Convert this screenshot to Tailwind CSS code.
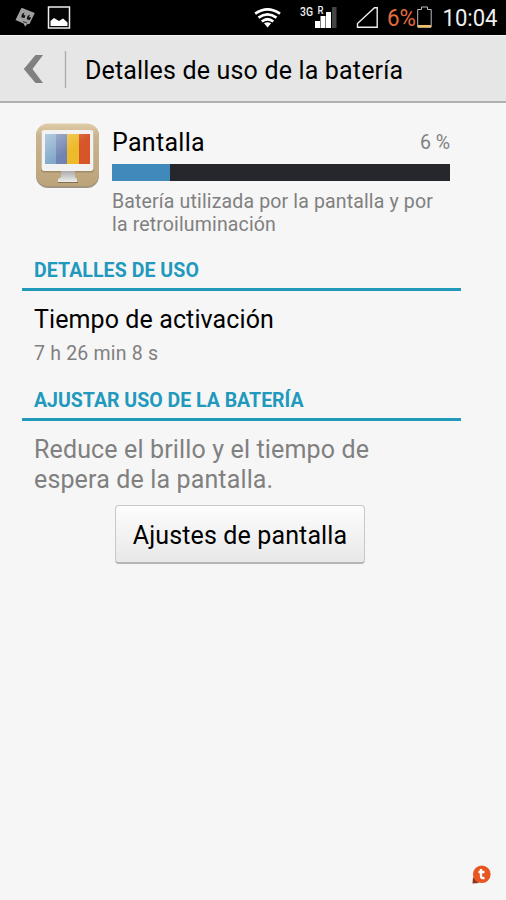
<!DOCTYPE html>
<html lang="es">
<head>
<meta charset="utf-8">
<title>Detalles de uso de la batería</title>
<script src="https://cdn.jsdelivr.net/npm/@tailwindcss/browser@4"></script>
</head>
<body class="w-[506px] h-[900px] overflow-hidden bg-[#f6f6f6] font-['Roboto',sans-serif] text-black whitespace-nowrap flex flex-col relative">
<div class="h-[35px] shrink-0 bg-black flex items-start">
  <svg class="w-[362px] h-[35px] shrink-0" viewBox="0 0 362 35">
    <path d="M21.500 7.800L34.800 13L29.500 24L27 24.200L25.200 26.800L23.500 23.500L15.500 20Z" fill="#a0a0a0"/>
    <path d="M24.500 12.500Q21 13.500 21.500 17.500L24.500 18L25.500 15.500L23.500 15ZM30 14.500Q26.500 15.500 27 19.500L30 20L31 17.500L29 17Z" fill="#111"/><path d="M23 21.500l4 1.500" stroke="#333"/>
    <rect x="48.500" y="7" width="21" height="21" fill="#050505" stroke="#eee" stroke-width="1.500"/>
    <path d="M50.500 26V21L54 18L56.500 19.500L59 21L63 18.500L67.500 22.500V26Z" fill="#fff"/>
    <g fill="none" stroke="#fff" stroke-width="2.700"><path d="M255.200 13.700Q267.500 5 280 13.700"/><path d="M258.500 17.700Q267.500 11.200 276.500 17.700"/><path d="M261.800 21.500Q267.500 17 273.300 21.500"/></g>
    <path d="M264 23.300Q267.500 21.200 271.200 23.300L267.600 27.500Z" fill="#fff"/>
    <text x="300" y="16" font-size="12.500" font-weight="500" fill="#eee" textLength="13" lengthAdjust="spacingAndGlyphs">3G</text>
    <text x="317.500" y="14" font-size="10.500" font-weight="500" fill="#eee" textLength="6" lengthAdjust="spacingAndGlyphs">R</text>
    <path d="M315 21h5v7h-5zM320.500 16h5v12h-5zM326 12h5v16h-5z" fill="#fff"/><path d="M332 7h4.500v21h-4.500z" fill="#444"/>
  </svg>
  <svg class="w-[144px] h-[35px] shrink-0 overflow-visible" viewBox="362 0 144 35">
    <path d="M377.200 7.800V27.200H357.500V23.500L374.500 7.800Z" fill="none" stroke="#eee" stroke-width="1.400"/>
    <text x="387" y="26" font-size="23.500" fill="#e26b3f" textLength="29" lengthAdjust="spacingAndGlyphs">6%</text>
    <path d="M421.500 8V7H427.500V9.500H431.200V27.200H417.700V9.500H421.500V8" fill="none" stroke="#bbb" stroke-width="1"/><path d="M418 25h13v2.500h-13z" fill="#f1bd68"/>
    <text x="442.500" y="26.300" font-size="24" fill="#eee" textLength="55" lengthAdjust="spacingAndGlyphs">10:04</text>
  </svg>
</div>
<header class="h-[68px] shrink-0 bg-[#e6e6e6] border-t border-t-[#f4f4f4] border-b-2 border-b-[#b0b0b0] flex items-center">
  <svg class="w-[85px] h-[65px] shrink-0" viewBox="0 0 85 65"><path d="M35.500 19H43L32.500 33L43 47H35.500L23.800 33Z" fill="#808080"/><path d="M65.500 15V52" stroke="#aaa" stroke-width="1.300"/></svg>
  <h1 class="text-[25px] leading-[30px] pt-[4px] tracking-[0.17px]">Detalles de uso de la batería</h1>
</header>
<main class="pt-[19px] pl-[22px] pr-[45px]">
  <section class="flex pl-[13px] h-[132px]">
    <svg class="w-[65px] h-[67px] shrink-0" viewBox="0 0 65 67">
      <defs>
        <linearGradient id="tan" x2="0" y2="1"><stop stop-color="#e0cca8"/><stop offset=".2" stop-color="#cab48e"/><stop offset="1" stop-color="#bca37a"/></linearGradient>
        <linearGradient id="shade" x2="1" y2="1"><stop stop-color="#fff" stop-opacity=".4"/><stop offset=".55" stop-color="#fff" stop-opacity="0"/></linearGradient>
        <linearGradient id="stand" x2="0" y2="1"><stop stop-color="#aaa"/><stop offset="1" stop-color="#eee"/></linearGradient>
      </defs>
      <rect x="1" y="2.500" width="63" height="63.500" rx="12" fill="#a19580"/>
      <rect x="1" y="1.500" width="63" height="62.500" rx="12" fill="url(#tan)"/>
      <rect x="6" y="9.500" width="53" height="41" rx="3" fill="#967f5b" opacity=".7"/>
      <rect x="6.500" y="8" width="52" height="41" rx="3" fill="#f2f2f2"/>
      <path d="M10 12h11v30H10z" fill="#82a9c9"/><path d="M21 12h11v30H21z" fill="#7183b1"/><path d="M32 12h12v30H32z" fill="#edba2b"/><path d="M44 12h11v30H44z" fill="#d75528"/>
      <path d="M10 12h45v30H10z" fill="url(#shade)"/>
      <path d="M26 49H40V55L42 57V60H23V57L26 55Z" fill="url(#stand)"/><path d="M23 60.500h20" stroke="#80704f"/>
    </svg>
    <div class="ml-[12px] w-[338px]">
      <div class="flex justify-between h-[42px] pt-[6px]">
        <h2 class="text-[25px] leading-[30px] tracking-[0.3px]">Pantalla</h2>
        <span class="text-[19.5px] leading-[29px] text-[#808080]">6 %</span>
      </div>
      <div class="h-[17px] bg-[#26262d]"><div class="h-full bg-[#408abb] w-[58px]"></div></div>
      <p class="text-[19.5px] tracking-[0.15px] leading-[23px] pt-[9px] text-[#808080]">Batería utilizada por la pantalla y por<br>la retroiluminación</p>
    </div>
  </section>
  <h3 class="h-[37px] pt-[5px] pl-[12px] border-b-3 border-[#2199b8] text-[19.5px] leading-[24px] font-bold tracking-[0.08px] text-[#2199bd]">DETALLES DE USO</h3>
  <div class="h-[93px] pl-[12px] pt-[14px]">
    <p class="text-[25px] leading-[30px] tracking-[0.1px]">Tiempo de activación</p>
    <p class="text-[19.5px] leading-[24px] mt-[7px] tracking-[0.2px] text-[#808080]">7 h 26 min 8 s</p>
  </div>
  <h3 class="h-[37px] pt-[5px] pl-[12px] border-b-3 border-[#2199b8] text-[19.5px] leading-[24px] font-bold tracking-[0px] text-[#2199bd]">AJUSTAR USO DE LA BATERÍA</h3>
  <p class="pl-[12px] pt-[14px] text-[25px] leading-[29.5px] tracking-[0.14px] text-[#808080]">Reduce el brillo y el tiempo de<br>espera de la pantalla.</p>
  <button class="block ml-[93px] mt-[11px] w-[250px] h-[59px] rounded-[4px] border border-[#c9c9c9] border-b-2 border-b-[#b5b5b5] bg-linear-to-b from-[#fdfdfd] to-[#e8e8e8] text-[25px] leading-[30px] pt-[3px] tracking-[0.13px]">Ajustes de pantalla</button>
</main>
<svg class="absolute left-[470px] top-[863px] w-[23px] h-[23px]" viewBox="0 0 23 23"><path d="M3 14L2.500 20.500L9 20Z" fill="#913520"/><circle cx="11.800" cy="11.300" r="8.800" fill="#e85520"/><path d="M11 6v7.500q0 2 3.500 1.500M8.500 9h6" fill="none" stroke="#fff" stroke-width="2.300"/></svg>
</body>
</html>
